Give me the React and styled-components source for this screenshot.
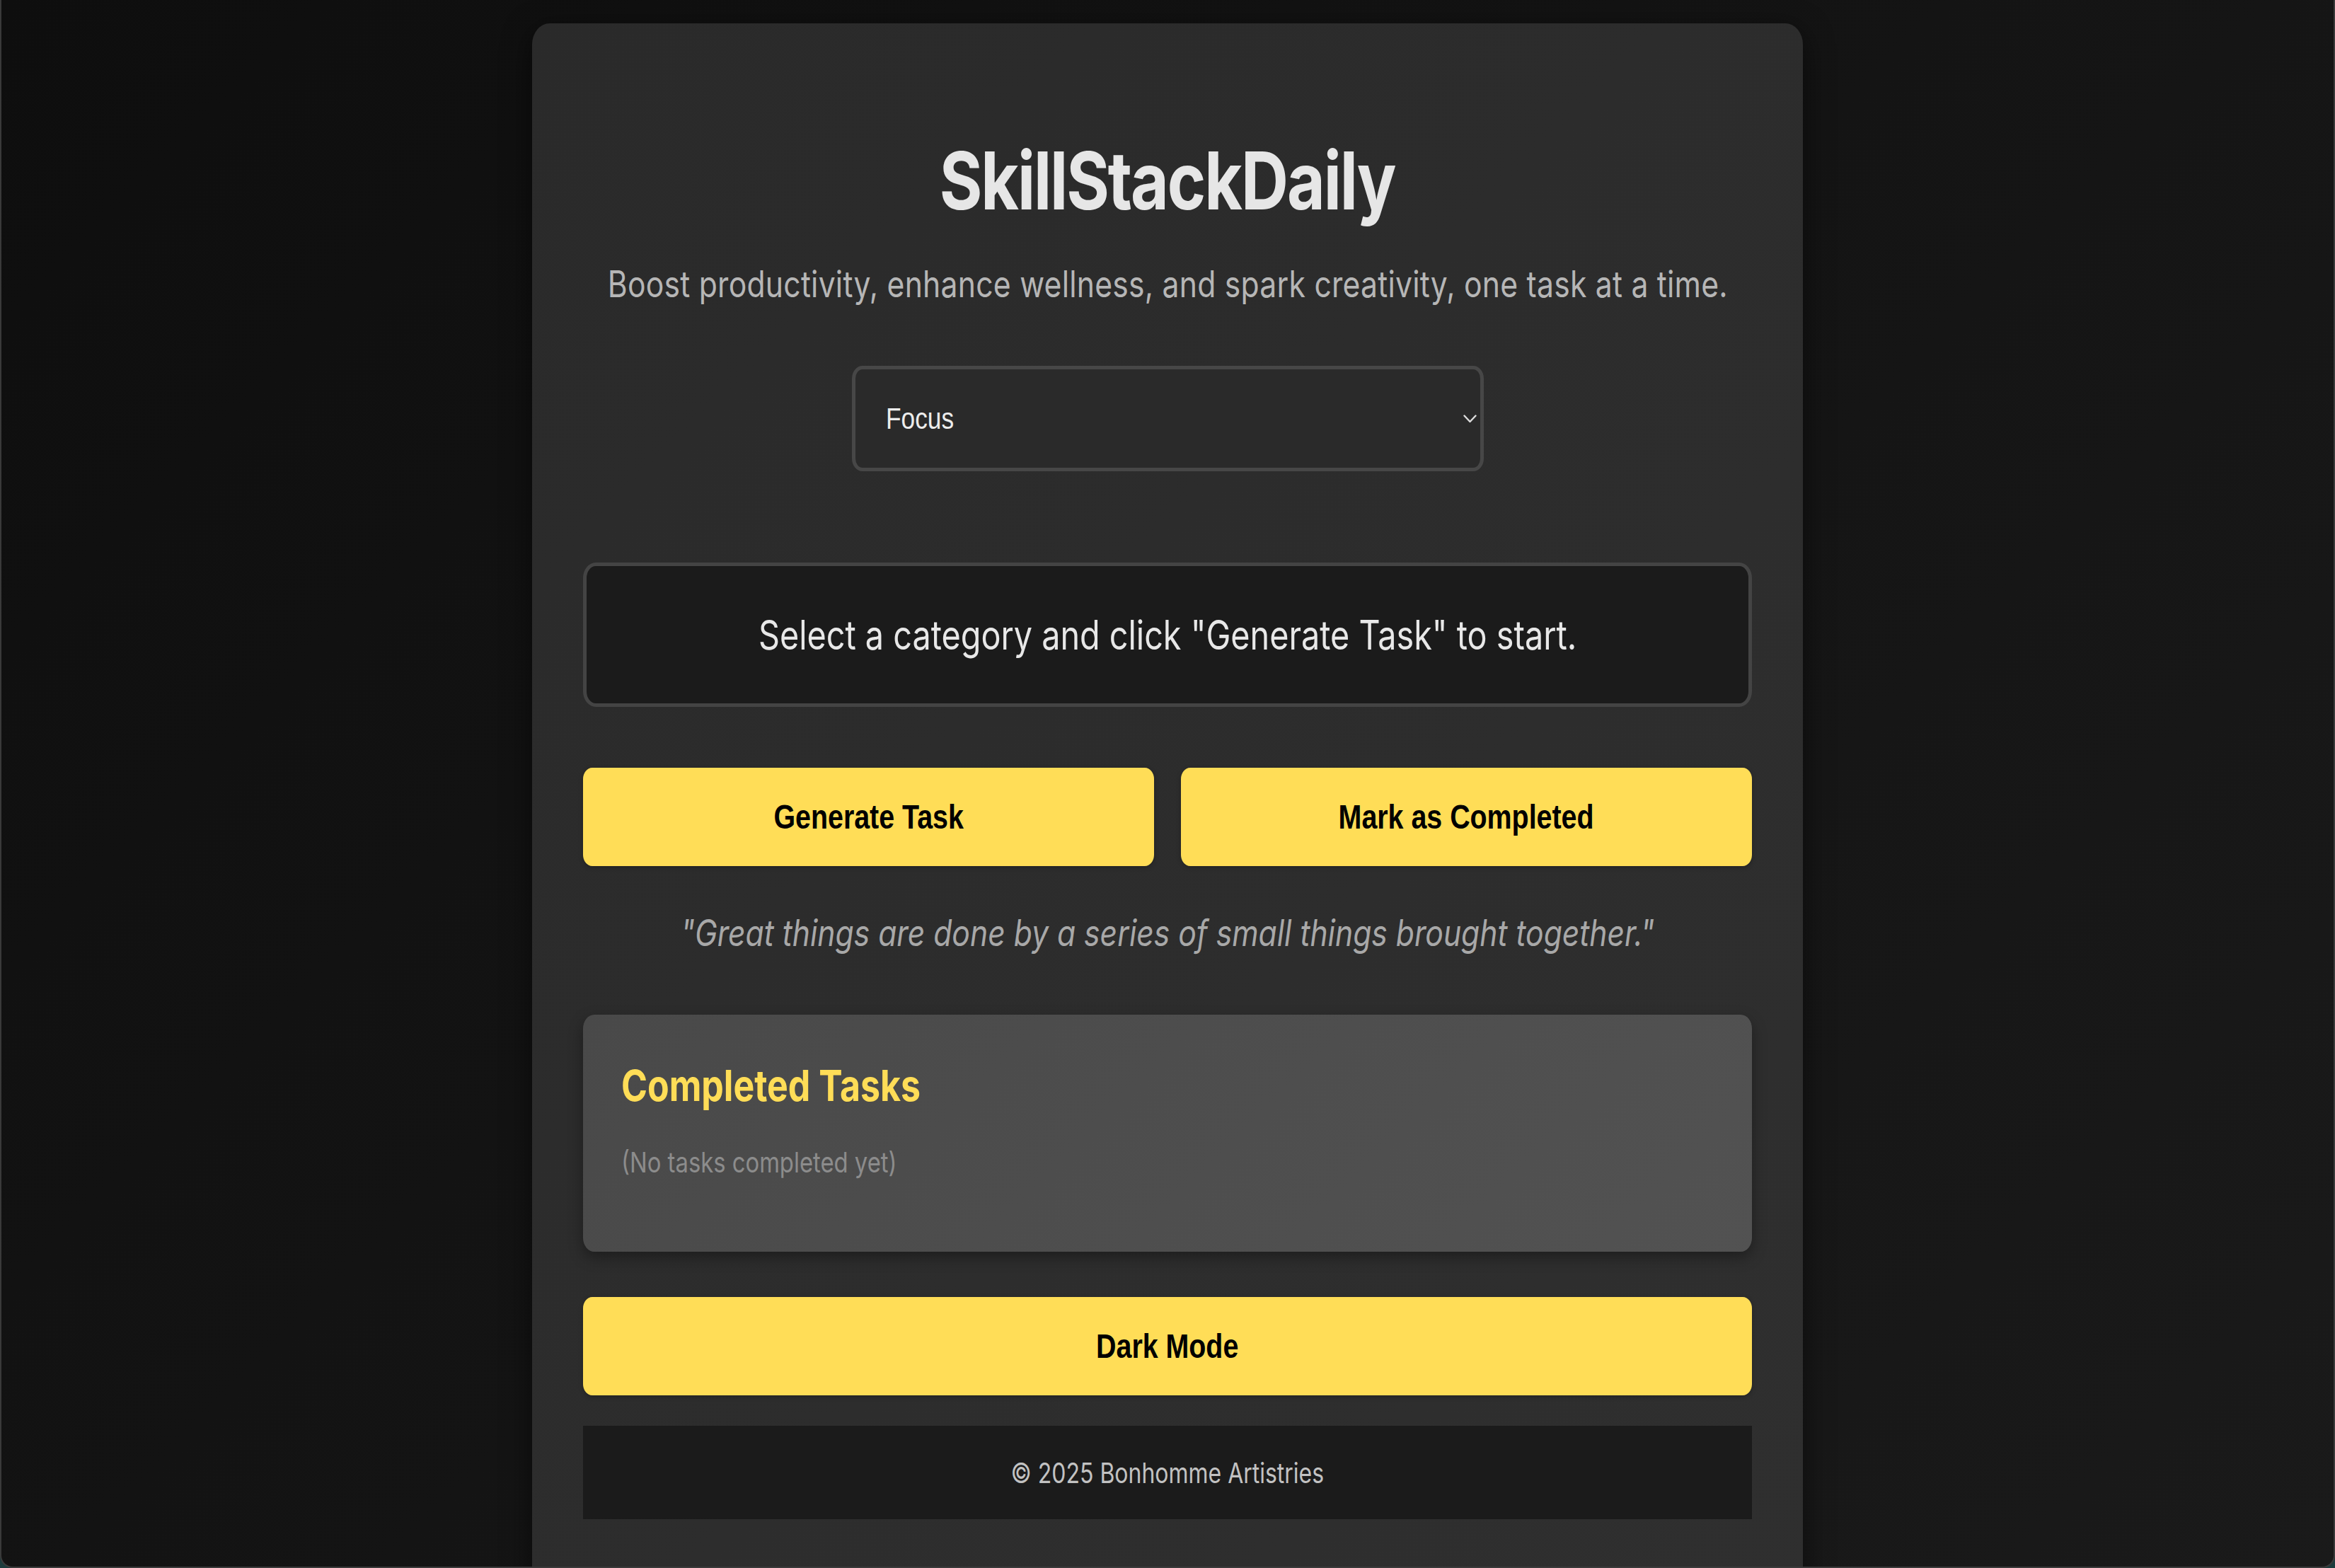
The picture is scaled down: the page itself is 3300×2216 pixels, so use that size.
import React, { useState } from "react";
import styled, { createGlobalStyle } from "styled-components";

// the reference is drawn narrow, so text is squeezed sideways to match it
const SQUEEZE = 0.82;
const YELLOW = "#ffdd57";

const GlobalStyle = createGlobalStyle`
  html, body {
    margin: 0;
    padding: 0;
    height: 100%;
    overflow: hidden;
    background: #1c3c3d;
  }
  * {
    box-sizing: border-box;
  }
`;

const Page = styled.div`
  height: 100vh;
  overflow: hidden;
  background: linear-gradient(135deg, #0e0e0e 0%, #1a1a1a 100%);
  border: 2px solid #3a3a3a;
  border-top: none;
  border-radius: 0 0 18px 18px;
  font-family: Inter, "Liberation Sans", sans-serif;
`;

const Card = styled.main`
  width: 1796px;
  margin: 33px auto 0;
  padding: 72px 72px 110px;
  display: flex;
  flex-direction: column;
  background: linear-gradient(135deg, #2a2a2a 0%, #2f2f2f 100%);
  border-radius: 25px / 30px;
  box-shadow: 0 10px 40px rgba(0, 0, 0, 0.55);
`;

const Squeeze = styled.span`
  display: inline-block;
  white-space: nowrap;
  transform: scaleX(${SQUEEZE});
  transform-origin: ${(p) => (p.$left ? "left center" : "center")};
`;

const Title = styled.h1`
  margin: 82px 0 0;
  display: flex;
  justify-content: center;
  font-size: 113px;
  line-height: 137px;
  font-weight: 700;
  letter-spacing: -2.5px;
  color: #e6e6e6;
`;

const Tagline = styled.p`
  margin: 46px 0 0;
  display: flex;
  justify-content: center;
  font-size: 52px;
  line-height: 63px;
  letter-spacing: 0.3px;
  color: #b6b6b6;
`;

const SelectBox = styled.button`
  align-self: center;
  margin-top: 84px;
  width: 893px;
  height: 149px;
  display: flex;
  align-items: center;
  justify-content: space-between;
  padding: 0 5px 0 43px;
  background: #2a2a2a;
  border: 5px solid #474747;
  border-radius: 15px / 18px;
  color: #ececec;
  font-family: "Liberation Sans", Arial, sans-serif;
  font-size: 43px;
  cursor: pointer;
`;

const TaskBox = styled.div`
  margin-top: 129px;
  height: 204px;
  display: flex;
  align-items: center;
  justify-content: center;
  background: #1b1b1b;
  border: 5px solid #444444;
  border-radius: 18px / 22px;
  color: #e8e8e8;
  font-size: 57px;
  line-height: 69px;
`;

const ButtonRow = styled.div`
  margin-top: 86px;
  display: grid;
  grid-template-columns: 1fr 1fr;
  gap: 38px;
`;

const ActionButton = styled.button`
  margin-top: ${(p) => p.$top || 0}px;
  height: 139px;
  display: flex;
  align-items: center;
  justify-content: center;
  border: none;
  border-radius: 13px / 16px;
  background: ${YELLOW};
  color: #000;
  font-family: "Liberation Sans", Arial, sans-serif;
  font-size: 48px;
  font-weight: 700;
  box-shadow: 0 2px 6px rgba(0, 0, 0, 0.25);
  cursor: pointer;
`;

const Quote = styled.p`
  margin: 63px 0 0;
  display: flex;
  justify-content: center;
  font-size: 52px;
  line-height: 63px;
  font-style: italic;
  color: #a8a8a8;
`;

const Panel = styled.section`
  margin-top: 84px;
  padding: 54px;
  background: linear-gradient(135deg, #494949 0%, #525252 100%);
  border-radius: 16px / 20px;
  box-shadow: 0 8px 20px rgba(0, 0, 0, 0.35);
`;

const PanelTitle = styled.h2`
  margin: 9px 0 0;
  font-size: 61px;
  line-height: 74px;
  font-weight: 700;
  color: ${YELLOW};
`;

const EmptyNote = styled.p`
  margin: 48px 0 48px;
  font-size: 40px;
  line-height: 48px;
  color: #8c8c8c;
`;

const TaskList = styled.ul`
  margin: 48px 0 48px;
  padding-left: 40px;
`;

const TaskItem = styled.li`
  font-size: 40px;
  line-height: 48px;
  color: #e0e0e0;
`;

const Footer = styled.footer`
  margin-top: 43px;
  height: 132px;
  display: flex;
  align-items: center;
  justify-content: center;
  background: #1b1b1b;
  font-size: 39px;
  color: #c2c2c2;
`;

const Chevron = () => (
  <svg width="19" height="12" viewBox="0 0 19 12" fill="none">
    <polyline
      points="1.5,1.5 9.5,10 17.5,1.5"
      stroke="#dddddd"
      strokeWidth="2.4"
      strokeLinecap="round"
      strokeLinejoin="round"
    />
  </svg>
);

const TASKS = {
  Focus: ["Work for 25 minutes without checking your phone.", "Write down your top 3 priorities."],
  Wellness: ["Drink a glass of water.", "Take a 10-minute walk outside."],
  Creativity: ["Sketch something on your desk.", "Write a six-word story."],
};
const CATEGORIES = Object.keys(TASKS);

const App = () => {
  const [category, setCategory] = useState("Focus");
  const [task, setTask] = useState(null);
  const [done, setDone] = useState([]);

  const nextCategory = () => {
    const i = CATEGORIES.indexOf(category);
    setCategory(CATEGORIES[(i + 1) % CATEGORIES.length]);
  };
  const generate = () => {
    const list = TASKS[category];
    setTask(list[Math.floor(Math.random() * list.length)]);
  };
  const complete = () => {
    if (task) {
      setDone([...done, task]);
      setTask(null);
    }
  };

  return (
    <Page>
      <GlobalStyle />
      <Card>
        <Title>
          <Squeeze>SkillStackDaily</Squeeze>
        </Title>
        <Tagline>
          <Squeeze>
            Boost productivity, enhance wellness, and spark creativity, one task at a time.
          </Squeeze>
        </Tagline>
        <SelectBox type="button" role="combobox" onClick={nextCategory}>
          <Squeeze $left>{category}</Squeeze>
          <Chevron />
        </SelectBox>
        <TaskBox>
          <Squeeze>{task || 'Select a category and click "Generate Task" to start.'}</Squeeze>
        </TaskBox>
        <ButtonRow>
          <ActionButton type="button" onClick={generate}>
            <Squeeze>Generate Task</Squeeze>
          </ActionButton>
          <ActionButton type="button" onClick={complete}>
            <Squeeze>Mark as Completed</Squeeze>
          </ActionButton>
        </ButtonRow>
        <Quote>
          <Squeeze>"Great things are done by a series of small things brought together."</Squeeze>
        </Quote>
        <Panel>
          <PanelTitle>
            <Squeeze $left>Completed Tasks</Squeeze>
          </PanelTitle>
          {done.length === 0 ? (
            <EmptyNote>
              <Squeeze $left>(No tasks completed yet)</Squeeze>
            </EmptyNote>
          ) : (
            <TaskList>
              {done.map((t, i) => (
                <TaskItem key={i}>
                  <Squeeze $left>{t}</Squeeze>
                </TaskItem>
              ))}
            </TaskList>
          )}
        </Panel>
        <ActionButton type="button" $top={64}>
          <Squeeze>Dark Mode</Squeeze>
        </ActionButton>
        <Footer>
          <Squeeze>© 2025 Bonhomme Artistries</Squeeze>
        </Footer>
      </Card>
    </Page>
  );
};

export default App;
